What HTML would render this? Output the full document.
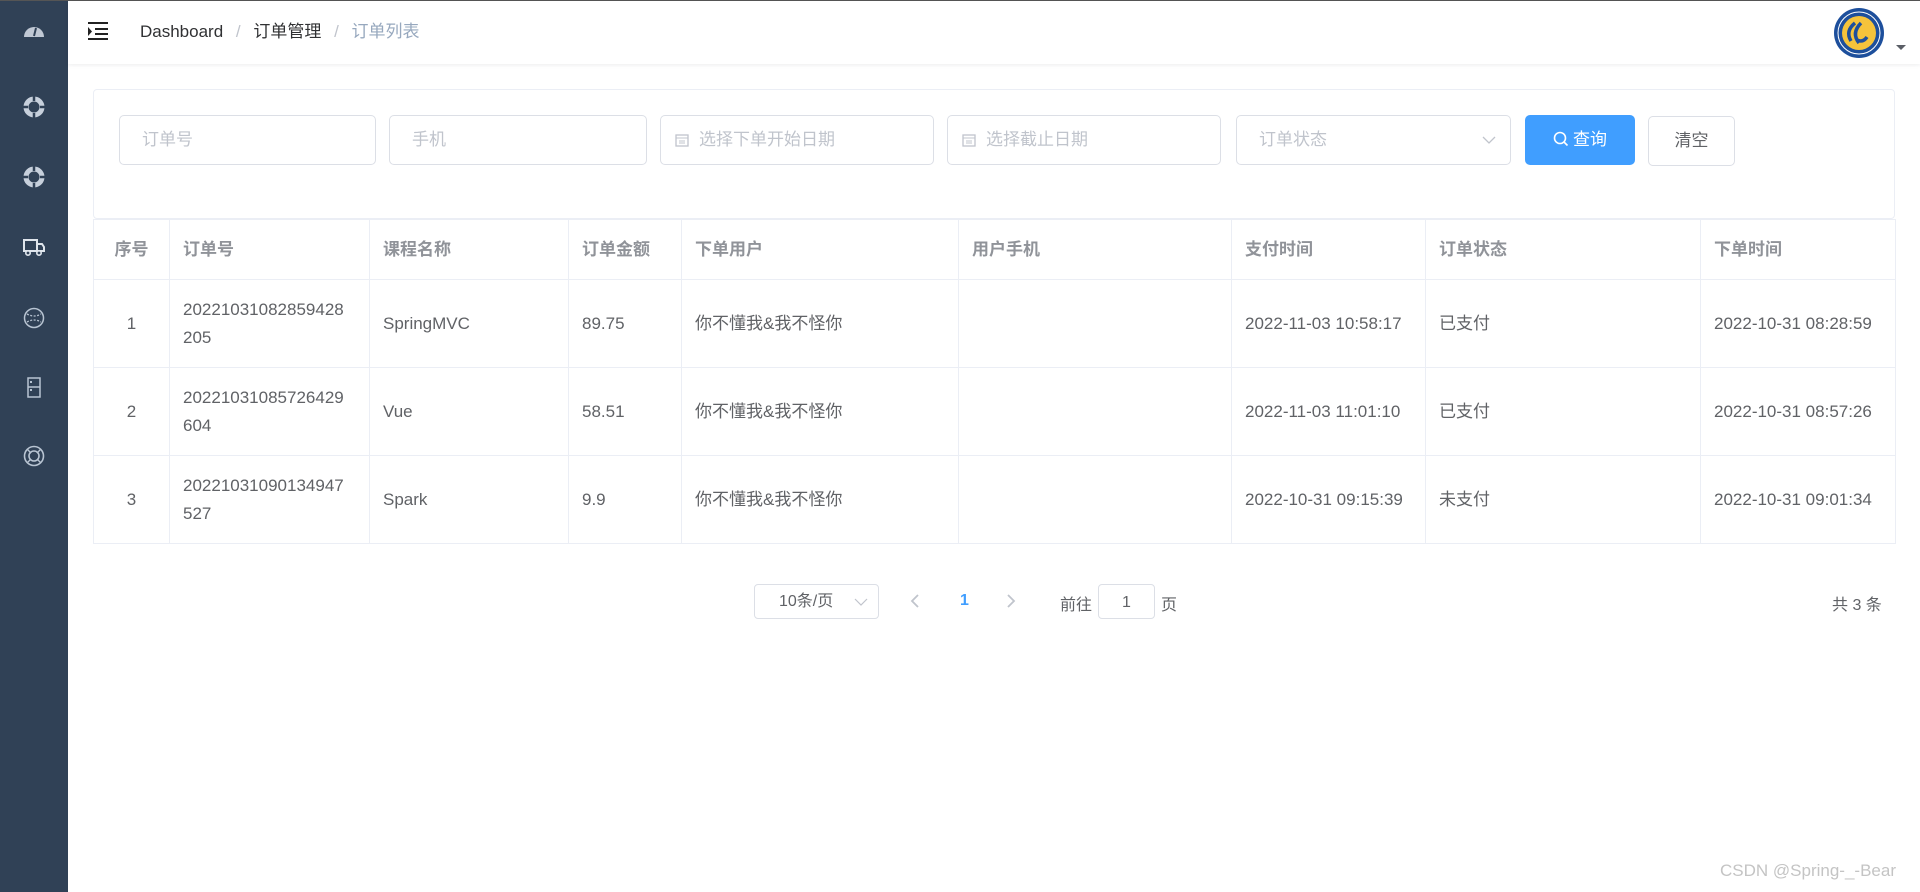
<!DOCTYPE html>
<html><head><meta charset="utf-8"><style>
*{box-sizing:border-box;margin:0;padding:0}
body{width:1920px;height:892px;overflow:hidden;background:#fff;font-family:"Liberation Sans","Noto Sans CJK SC",sans-serif;font-size:17px;color:#606266;position:relative}
.topline{position:absolute;left:0;top:0;width:1920px;height:1px;background:#555}
.side{position:absolute;left:0;top:1px;width:68px;height:891px;background:#304156}
.side svg{position:absolute;left:22px}
.hdr{position:absolute;left:68px;top:1px;width:1852px;height:63px;background:#fff;box-shadow:0 1px 4px rgba(0,21,41,.08)}
.abs{position:absolute}
.card{position:absolute;left:93px;top:89px;width:1802px;height:130px;border:1px solid #ebeef5;border-radius:4px}
.inp{position:absolute;top:115px;height:50px;border:1px solid #dcdfe6;border-radius:5px;color:#c0c4cc;line-height:48px;padding-left:22px}
table{position:absolute;left:93px;top:219px;border-collapse:collapse;table-layout:fixed}
td,th{border:1px solid #ebeef5;padding:0 13px;text-align:left;line-height:28px}
th{height:60px;color:#909399;font-weight:bold}
td{height:88px}
.c{text-align:center}
</style></head><body>
<div class="topline"></div>
<div class="side">
<svg style="top:20px" width="24" height="20" viewBox="0 0 24 20"><path d="M2 16a10 10 0 0 1 20 0z" fill="#c0c8d4"/><path d="M12 15l2-8" stroke="#304156" stroke-width="2"/></svg>
<svg style="top:94px" width="24" height="24" viewBox="0 0 24 24"><circle cx="12" cy="12" r="8" fill="none" stroke="#c7d0dc" stroke-width="5"/><path d="M12 1v5M12 18v5M1 12h5M18 12h5" stroke="#304156" stroke-width="2.5"/></svg>
<svg style="top:164px" width="24" height="24" viewBox="0 0 24 24"><circle cx="12" cy="12" r="8" fill="none" stroke="#c7d0dc" stroke-width="5"/><path d="M12 1v5M12 18v5M1 12h5M18 12h5" stroke="#304156" stroke-width="2.5"/></svg>
<svg style="top:236px" width="24" height="20" viewBox="0 0 24 20"><path d="M2 3h13v11H2zM15 7h5l2 3v4h-7" fill="none" stroke="#dfe5ec" stroke-width="2"/><circle cx="6" cy="16" r="2.2" fill="#304156" stroke="#dfe5ec" stroke-width="1.6"/><circle cx="17" cy="16" r="2.2" fill="#304156" stroke="#dfe5ec" stroke-width="1.6"/></svg>
<svg style="top:305px" width="24" height="24" viewBox="0 0 24 24"><circle cx="12" cy="12" r="9.5" fill="none" stroke="#b8c4d2" stroke-width="1.5"/><path d="M5 8q7 4 14 0M5 16q7-4 14 0" fill="none" stroke="#b8c4d2" stroke-width="1.3" stroke-dasharray="2 1.5"/></svg>
<svg style="top:374px" width="24" height="24" viewBox="0 0 24 24"><rect x="6" y="3" width="12" height="19" fill="none" stroke="#b8c4d2" stroke-width="1.5"/><path d="M6 12h12" stroke="#b8c4d2" stroke-width="1.5"/><rect x="8" y="6" width="2" height="2" fill="#b8c4d2"/><rect x="8" y="14" width="2" height="2" fill="#b8c4d2"/></svg>
<svg style="top:443px" width="24" height="24" viewBox="0 0 24 24"><circle cx="12" cy="12" r="9.5" fill="none" stroke="#b8c4d2" stroke-width="1.6"/><circle cx="12" cy="12" r="5" fill="none" stroke="#b8c4d2" stroke-width="1.6"/><path d="M5 5l4 4M19 5l-4 4M5 19l4-4M19 19l-4-4" stroke="#b8c4d2" stroke-width="1.4"/></svg>
</div>
<div class="hdr">
<svg class="abs" style="left:20px;top:20px" width="22" height="20" viewBox="0 0 22 20"><path d="M0 2h20M7 8h13M7 13h13M0 18h20" stroke="#222" stroke-width="2"/><path d="M0 6l4 4.5-4 4.5z" fill="#222"/></svg>
<div class="abs" style="left:72px;top:16px;color:#303133">Dashboard <span style="color:#c0c4cc;margin:0 8px">/</span> 订单管理 <span style="color:#c0c4cc;margin:0 8px">/</span> <span style="color:#97a8be">订单列表</span></div>
<svg class="abs" style="left:1765px;top:6px" width="52" height="52" viewBox="0 0 52 52"><circle cx="26" cy="26" r="25" fill="#1d4f9c"/><circle cx="26" cy="26" r="21" fill="none" stroke="#fff" stroke-width="1"/><circle cx="26" cy="26" r="17" fill="#f5c33b"/><path d="M18 34q-6-10 4-18M26 36q-8-10 2-20M34 30q-4 6-10 3" fill="none" stroke="#1d4f9c" stroke-width="3.5"/></svg>
<div class="abs" style="left:1828px;top:44px;width:0;height:0;border-left:5px solid transparent;border-right:5px solid transparent;border-top:5px solid #5a5e66"></div>
</div>
<div class="card"></div>
<div class="inp" style="left:119px;width:257px">订单号</div>
<div class="inp" style="left:389px;width:258px">手机</div>
<div class="inp" style="left:660px;width:274px;padding-left:38px">选择下单开始日期<svg class="abs" style="left:14px;top:17px" width="14" height="14" viewBox="0 0 14 14"><rect x="1" y="2" width="12" height="11" fill="none" stroke="#c0c4cc" stroke-width="1.3"/><path d="M1 5h12M4 8h6M4 10h6" stroke="#c0c4cc"/></svg></div>
<div class="inp" style="left:947px;width:274px;padding-left:38px">选择截止日期<svg class="abs" style="left:14px;top:17px" width="14" height="14" viewBox="0 0 14 14"><rect x="1" y="2" width="12" height="11" fill="none" stroke="#c0c4cc" stroke-width="1.3"/><path d="M1 5h12M4 8h6M4 10h6" stroke="#c0c4cc"/></svg></div>
<div class="inp" style="left:1236px;width:275px">订单状态<svg class="abs" style="right:14px;top:19px" width="14" height="10" viewBox="0 0 14 10"><path d="M1 2l6 6 6-6" fill="none" stroke="#c0c4cc" stroke-width="1.3"/></svg></div>
<div class="abs" style="left:1525px;top:115px;width:110px;height:50px;background:#409eff;border-radius:5px;color:#fff;line-height:50px;text-align:center"><svg style="vertical-align:-2px;margin-right:4px" width="16" height="16" viewBox="0 0 16 16"><circle cx="7" cy="7" r="5.5" fill="none" stroke="#fff" stroke-width="1.6"/><path d="M11 11l3.5 3.5" stroke="#fff" stroke-width="1.6"/></svg>查询</div>
<div class="abs" style="left:1648px;top:116px;width:87px;height:50px;border:1px solid #dcdfe6;border-radius:5px;color:#606266;line-height:48px;text-align:center">清空</div>
<table>
<colgroup><col width="76"><col width="200"><col width="199"><col width="113"><col width="277"><col width="273"><col width="194"><col width="275"><col width="195"></colgroup>
<tr><th class="c">序号</th><th>订单号</th><th>课程名称</th><th>订单金额</th><th>下单用户</th><th>用户手机</th><th>支付时间</th><th>订单状态</th><th>下单时间</th></tr>
<tr><td class="c">1</td><td>20221031082859428<br>205</td><td>SpringMVC</td><td>89.75</td><td>你不懂我&amp;我不怪你</td><td></td><td>2022-11-03 10:58:17</td><td>已支付</td><td>2022-10-31 08:28:59</td></tr>
<tr><td class="c">2</td><td>20221031085726429<br>604</td><td>Vue</td><td>58.51</td><td>你不懂我&amp;我不怪你</td><td></td><td>2022-11-03 11:01:10</td><td>已支付</td><td>2022-10-31 08:57:26</td></tr>
<tr><td class="c">3</td><td>20221031090134947<br>527</td><td>Spark</td><td>9.9</td><td>你不懂我&amp;我不怪你</td><td></td><td>2022-10-31 09:15:39</td><td>未支付</td><td>2022-10-31 09:01:34</td></tr>
</table>
<div class="abs" style="left:754px;top:584px;width:125px;height:35px;border:1px solid #dcdfe6;border-radius:4px;line-height:33px;padding-left:24px;font-size:16px">10条/页<svg class="abs" style="right:10px;top:12px" width="14" height="10" viewBox="0 0 14 10"><path d="M1 2l6 6 6-6" fill="none" stroke="#c0c4cc" stroke-width="1.2"/></svg></div>
<svg class="abs" style="left:910px;top:593px" width="10" height="16" viewBox="0 0 10 16"><path d="M8 2L2 8l6 6" fill="none" stroke="#c0c4cc" stroke-width="1.8"/></svg>
<div class="abs" style="left:960px;top:592px;color:#409eff;font-weight:bold;font-size:16px">1</div>
<svg class="abs" style="left:1006px;top:593px" width="10" height="16" viewBox="0 0 10 16"><path d="M2 2l6 6-6 6" fill="none" stroke="#c0c4cc" stroke-width="1.8"/></svg>
<div class="abs" style="left:1060px;top:591px;font-size:16px">前往</div>
<div class="abs" style="left:1098px;top:584px;width:57px;height:35px;border:1px solid #dcdfe6;border-radius:4px;line-height:35px;text-align:center;font-size:16px">1</div>
<div class="abs" style="left:1161px;top:591px;font-size:16px">页</div>
<div class="abs" style="left:1832px;top:591px;font-size:16px">共 3 条</div>
<div class="abs" style="left:1720px;top:861px;color:#c4c4c4;font-size:17px">CSDN @Spring-_-Bear</div>
</body></html>
